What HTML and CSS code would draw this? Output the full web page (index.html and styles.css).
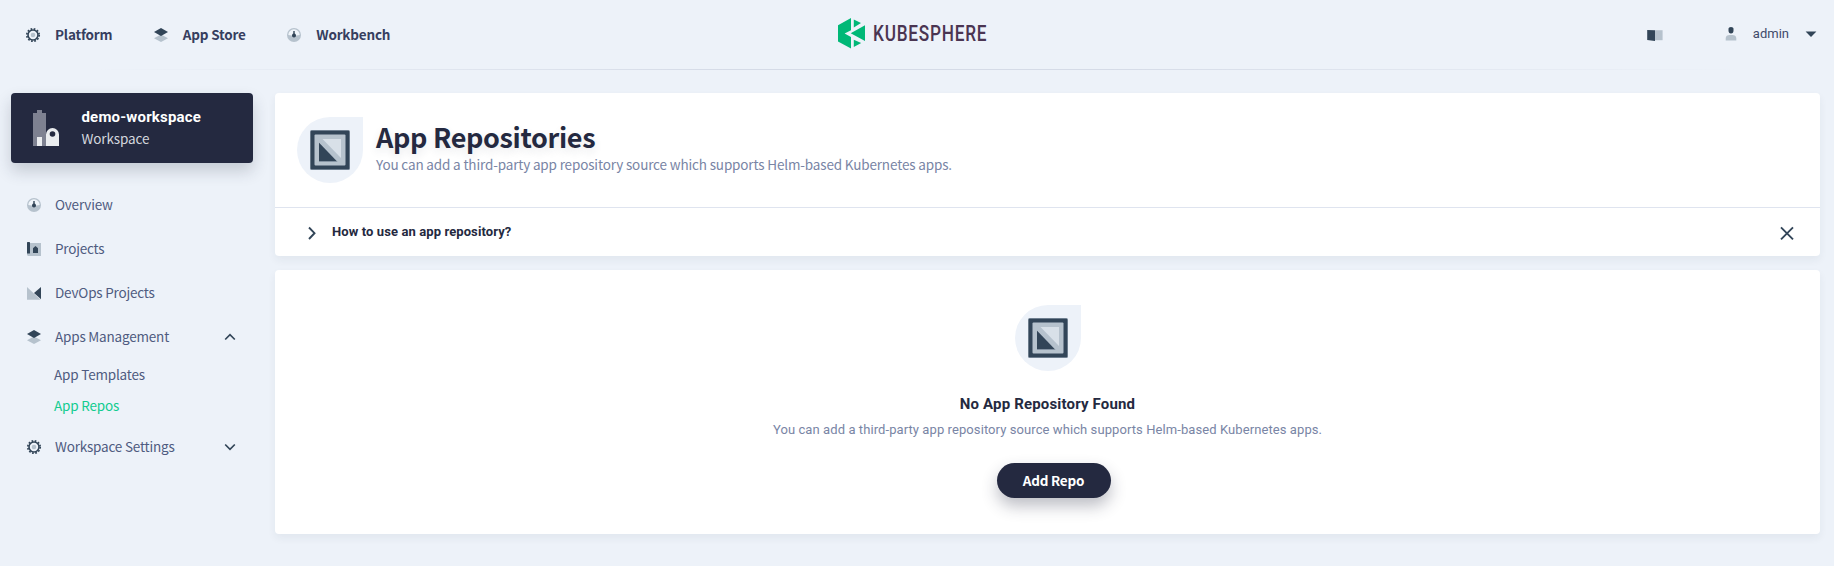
FILE: index.html
```html
<!DOCTYPE html>
<html lang="en">
<head>
<meta charset="utf-8">
<title>KubeSphere - App Repositories</title>
<link rel="stylesheet" href="styles.css">
</head>
<body>
<svg class="sprite" aria-hidden="true">
  <symbol id="gear" viewBox="0 0 16 16">
    <circle cx="8" cy="8" r="6.2" fill="none" stroke="#324558" stroke-width="1.7" stroke-dasharray="1.7 1.546"/>
    <circle cx="8" cy="8" r="5" fill="none" stroke="#324558" stroke-width="1.6"/>
    <circle cx="8" cy="8" r="2.3" fill="#b6c2cd"/>
  </symbol>
  <symbol id="layers" viewBox="0 0 16 16">
    <path d="M1 11.2 8 7.6l7 3.6L8 15z" fill="#b6c2cd"/>
    <path d="M1 5 8 1l7 4-7 4z" fill="#324558"/>
  </symbol>
  <symbol id="gauge" viewBox="0 0 16 16">
    <circle cx="8" cy="8" r="7" fill="#b6c2cd"/>
    <path d="M2.3 8a5.7 5.7 0 0 1 11.4 0l-5 .8H7.3z" fill="#eff4f9"/>
    <path d="M7.3 4h1.4v2.6a2 2 0 1 1-1.4 0z" fill="#324558"/>
  </symbol>
  <symbol id="project" viewBox="0 0 16 16">
    <path d="M4 2h11v13H2l-1-1v-2h3z" fill="#b6c2cd"/>
    <rect x="1" y="1" width="3" height="11.5" rx=".6" fill="#324558"/>
    <path d="M7 7.2 9.5 5 12 7.2V12H7z" fill="#324558"/>
  </symbol>
  <symbol id="devops" viewBox="0 0 16 16">
    <path d="M1 2l13.5 12.8H1z" fill="#b6c2cd"/>
    <path d="M15 2v12.3L8 8z" fill="#324558"/>
  </symbol>
  <symbol id="repo" viewBox="0 0 40 40">
    <rect width="40" height="40" rx="1.5" fill="#8493a3"/>
    <rect x=".7" y=".7" width="38.6" height="38.6" rx="1" fill="#324558"/>
    <rect x="4.5" y="4.5" width="31" height="31" rx="1" fill="#b6c2cd"/>
    <path d="M12.5 9H31v19z" fill="#d8e0e8"/>
    <path d="M9 12.7 27.7 32H9z" fill="#8493a3"/>
    <path d="M9 12.7 26.5 31H9z" fill="#324558"/>
  </symbol>
  <symbol id="chevron" viewBox="0 0 16 16">
    <path d="M3.2 5.5 8 10.3l4.8-4.8" fill="none" stroke="#324558" stroke-width="1.7"/>
  </symbol>
</svg>

<header class="header">
  <nav class="topnav">
    <a class="topnav-item"><svg class="icon"><use href="#gear"/></svg><span class="label">Platform</span></a>
    <a class="topnav-item"><svg class="icon"><use href="#layers"/></svg><span class="label">App Store</span></a>
    <a class="topnav-item"><svg class="icon"><use href="#gauge"/></svg><span class="label">Workbench</span></a>
  </nav>
  <div class="logo">
    <svg class="logo-mark" viewBox="0 0 28 32">
      <path d="M0 8.2 13 1v12.200L6.600 16.500 13 20v11.600L0 24.400z" fill="#00b877"/>
      <path d="M15.800 2.400 23 6 15.800 10.400zM15.800 22.700 23.200 26 15.800 30zM27 8.300v15.600L12.700 16.300z" fill="#00b877"/>
    </svg>
    <span class="logo-text">KUBESPHERE</span>
  </div>
  <div class="tools">
    <svg class="icon book" viewBox="0 0 16 16"><path d="M8 3.200h7.600v10H8z" fill="#b6c2cd"/><path d="M.2 3 8 3.300V14L.2 13z" fill="#324558"/></svg>
    <svg class="icon user" viewBox="0 0 16 16"><path d="M2.700 14.500v-2.200a4 3.600 0 0 1 4-3.300h2.600a4 3.600 0 0 1 4 3.300v2.200z" fill="#b6c2cd"/><path d="M5.500 2.500Q5.500 1 8 1t2.500 1.500v2a2.500 3 0 0 1-5 0z" fill="#324558"/></svg>
    <span class="username">admin</span>
    <svg class="icon" viewBox="0 0 16 16"><path d="M2.600 5.600h10.800L8 11z" fill="#324558"/></svg>
  </div>
</header>

<div class="layout">
  <aside class="sidebar">
    <div class="workspace">
      <svg class="workspace-icon" viewBox="0 0 40 40">
        <path d="M7 5h4V2h5v3h4v33H7z" fill="#7e8191"/>
        <path d="M11 29h5v9h-5zM20 38V26.500a6.500 6.500 0 0 1 13 0V38z" fill="#eaecef"/>
        <circle cx="26.500" cy="26" r="2.800" fill="#242940"/>
      </svg>
      <div>
        <div class="workspace-name">demo-workspace</div>
        <div class="workspace-type">Workspace</div>
      </div>
    </div>
    <nav class="menu">
      <a class="menu-item"><svg class="icon"><use href="#gauge"/></svg><span class="label">Overview</span></a>
      <a class="menu-item"><svg class="icon"><use href="#project"/></svg><span class="label">Projects</span></a>
      <a class="menu-item"><svg class="icon"><use href="#devops"/></svg><span class="label">DevOps Projects</span></a>
      <a class="menu-item"><svg class="icon"><use href="#layers"/></svg><span class="label">Apps Management</span><svg class="icon toggle open"><use href="#chevron"/></svg></a>
      <div class="submenu">
        <a class="submenu-item">App Templates</a>
        <a class="submenu-item active">App Repos</a>
      </div>
      <a class="menu-item"><svg class="icon"><use href="#gear"/></svg><span class="label">Workspace Settings</span><svg class="icon toggle"><use href="#chevron"/></svg></a>
    </nav>
  </aside>

  <main class="content">
    <section class="card banner">
      <div class="banner-head">
        <div class="drop"><svg class="repo-icon"><use href="#repo"/></svg></div>
        <div>
          <h1 class="title">App Repositories</h1>
          <p class="subtitle">You can add a third-party app repository source which supports Helm-based Kubernetes apps.</p>
        </div>
      </div>
      <div class="tip">
        <svg class="tip-arrow" viewBox="0 0 20 20"><path d="M7 4.500 12.500 10.200 7 16" fill="none" stroke="#324558" stroke-width="1.900"/></svg>
        <span class="tip-title">How to use an app repository?</span>
        <svg class="tip-close" viewBox="0 0 20 20"><path d="M4 4.300l12 12M16 4.300l-12 12" fill="none" stroke="#324558" stroke-width="1.900"/></svg>
      </div>
    </section>
    <section class="card empty">
      <div class="drop"><svg class="repo-icon"><use href="#repo"/></svg></div>
      <h2 class="empty-title">No App Repository Found</h2>
      <p class="empty-text">You can add a third-party app repository source which supports Helm-based Kubernetes apps.</p>
      <button class="add-button">Add Repo</button>
    </section>
  </main>
</div>
</body>
</html>
```
FILE: styles.css
```css
* { box-sizing: border-box; }
body {
  margin: 0;
  min-height: 566px;
  background: #edf2f9;
  color: #242940;
  font-family: "Noto Sans CJK SC", sans-serif;
  font-size: 13.5px;
  line-height: 20px;
}
h1, h2, p { margin: 0; }
.sprite { display: none; }
.icon { width: 16px; height: 16px; flex: none; }
.label { padding-bottom: 2px; letter-spacing: -.19px; }

.header {
  display: grid;
  grid-template-columns: 1fr 160px 1fr;
  height: 70px;
  padding: 0 15px 0 25px;
  background: linear-gradient(to right, rgba(213, 219, 231, 0) 5%, #d5dbe7 40%, #d5dbe7 60%, rgba(213, 219, 231, 0) 95%) bottom / 100% 1px no-repeat;
}
.topnav { display: flex; align-items: center; gap: 40.5px; }
.topnav-item { display: flex; align-items: center; gap: 14px; color: #363e5f; font-weight: 700; }
.logo { display: flex; align-items: center; gap: 7px; height: 32px; margin: 17px 0 0 -4px; }
.logo-mark { flex: none; width: 28px; height: 32px; }
.logo-text {
  color: #4a3552;
  font: 500 22.5px/32px Roboto, sans-serif;
  letter-spacing: 1px;
  transform: scaleX(.765);
  transform-origin: left;
}
.tools { display: flex; align-items: center; justify-content: flex-end; height: 68px; }
.book { margin: 1px 60px 0 0; }
.username { margin: 0 14px; color: #404a6a; font: 400 13px/20px Roboto, sans-serif; }

.layout { display: flex; gap: 22px; padding: 23px 14px 0 11px; }
.sidebar { flex: none; width: 242px; }
.workspace {
  display: flex;
  align-items: center;
  gap: 15.5px;
  height: 70px;
  padding: 0 15px;
  border-radius: 4px;
  background: #242940;
  box-shadow: 0 8px 16px rgba(36, 46, 66, .2);
}
.workspace-icon { width: 40px; height: 40px; }
.workspace-name { color: #fff; font: 700 15px/20px Roboto, sans-serif; letter-spacing: .18px; }
.workspace-type { margin: 1px 0 2px; color: #d3d6dd; letter-spacing: -.1px; }
.menu { padding-top: 20px; }
.menu-item { display: flex; align-items: center; gap: 13px; height: 44px; padding: 0 15px; color: #4f5b80; }
.toggle { margin-left: auto; }
.open { transform: rotate(180deg); }
.submenu { padding: 0 0 4px 43px; }
.submenu-item { display: block; height: 31px; line-height: 31px; color: #4f5b80; letter-spacing: -.18px; }
.active { color: #12cc90; }

.content { flex: 1; display: grid; gap: 14px; }
.card { border-radius: 4px; background: #fff; box-shadow: 0 4px 8px rgba(36, 46, 66, .06); }
.banner-head { display: flex; gap: 13px; height: 115px; padding: 24px 22px; border-bottom: 1px solid #dfe4ef; }
.drop {
  display: grid;
  place-items: center;
  flex: none;
  width: 66px;
  height: 66px;
  border-radius: 50% 0 50% 50%;
  background: #edf2f9;
}
.repo-icon { width: 40px; height: 40px; }
.title { margin-top: 2px; font-size: 27px; line-height: 36px; letter-spacing: -.33px; text-shadow: 0 4px 8px rgba(36, 46, 66, .1); }
.subtitle { margin-top: -1px; color: #7985a5; letter-spacing: -.15px; }
.tip { display: flex; align-items: center; height: 48px; padding: 0 23px 0 27px; }
.tip-arrow, .tip-close { width: 20px; height: 20px; margin-top: 1px; }
.tip-title { margin: 0 auto 1px 10px; font: 700 13px/20px Roboto, sans-serif; letter-spacing: .1px; }
.empty { display: flex; flex-direction: column; align-items: center; height: 264px; padding-top: 35px; }
.empty-title { margin-top: 21px; font: 700 15px/24px Roboto, sans-serif; letter-spacing: .17px; }
.empty-text { margin-top: 4px; color: #7985a5; font: 400 13px/20px Roboto, sans-serif; letter-spacing: .085px; }
.add-button {
  width: 114px;
  height: 35px;
  margin: 23px 0 0 12px;
  padding: 0 0 2px;
  border: 0;
  border-radius: 18px;
  background: #242940;
  color: #fff;
  font: 700 13.5px/20px "Noto Sans CJK SC", sans-serif;
  letter-spacing: -.2px;
  box-shadow: 0 8px 16px rgba(36, 41, 64, .3);
}
```
